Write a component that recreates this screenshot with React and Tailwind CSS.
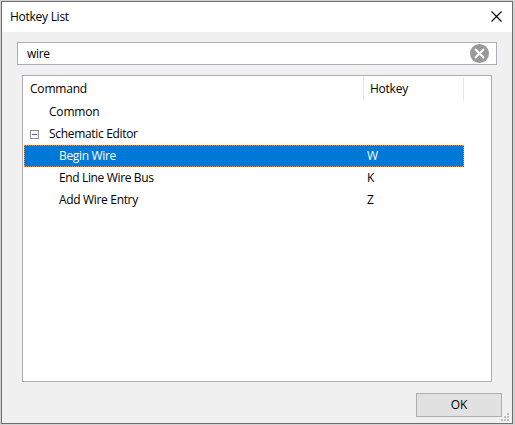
import React from "react";

const rows = [
  { name: "Begin Wire", hotkey: "W", selected: true, spacing: "tracking-[-0.33px]" },
  { name: "End Line Wire Bus", hotkey: "K", spacing: "tracking-[-0.36px]" },
  { name: "Add Wire Entry", hotkey: "Z", spacing: "tracking-[-0.33px]" },
];

function TitleBar() {
  return (
    <div className="flex h-[30px] items-start justify-between bg-white pr-[10px] pl-2">
      <span className="mt-[7px] tracking-[-0.27px]">Hotkey List</span>
      <svg className="mt-[9px]" width="11" height="11" viewBox="0 0 11 11" fill="none" stroke="#000" strokeWidth="1.1">
        <path d="M0.5 0.5L10.5 10.5M10.5 0.5L0.5 10.5" />
      </svg>
    </div>
  );
}

function SearchField() {
  return (
    <div className="mr-[15px] ml-[15px] flex h-[23px] items-center justify-between border border-[#abadb3] bg-white pr-[7px] pl-[9px]">
      <span className="tracking-[-0.3px]">wire</span>
      <svg width="19" height="19" viewBox="0 0 19 19">
        <circle cx="9.5" cy="9.5" r="9.5" fill="#999" />
        <path d="M5 5L14 14M14 5L5 14" stroke="#fff" strokeWidth="2" />
      </svg>
    </div>
  );
}

function Row({ row }) {
  return (
    <div className={`relative flex h-[22px] w-[440px] items-center ${row.selected ? "bg-[#0078d7] text-white" : ""}`}>
      <span className={`w-[343px] pl-[35px] ${row.spacing}`}>{row.name}</span>
      <span>{row.hotkey}</span>
      {row.selected && (
        <svg className="absolute inset-0" width="440" height="22" fill="none" stroke="#ff8728" strokeDasharray="1 1">
          <path d="M0 0.5H440M0 21.5H440M0.5 0V22M439.5 0V22" />
        </svg>
      )}
    </div>
  );
}

export default function App() {
  return (
    <div className="h-[425px] w-[515px] bg-[#d2d2d2] pt-px pl-px font-['Open_Sans','Noto_Sans',sans-serif] text-[12px] leading-4 whitespace-nowrap text-black">
      <div className="flex h-[423px] w-[512px] flex-col border border-[#6e6e6e] bg-[#f0f0f0]">
        <TitleBar />
        <div className="h-[10px]" />
        <SearchField />
        <div className="mt-[10px] ml-5 h-[307px] w-[470px] border border-[#abadb3] bg-white p-px">
          <div className="flex h-6 items-center">
            <div className="flex h-6 w-[340px] items-center border-r border-[#e5e5e5] pl-1.5 tracking-[-0.2px]">Command</div>
            <div className="flex h-6 w-[100px] items-center border-r border-[#e5e5e5] pl-1.5 tracking-[-0.25px]">Hotkey</div>
          </div>
          <div className="flex h-[22px] items-center pl-[25px] tracking-[-0.2px]">Common</div>
          <div className="flex h-[22px] items-center pl-1.5">
            <svg className="mr-[10px]" width="9" height="9" viewBox="0 0 9 9" fill="none" shapeRendering="crispEdges">
              <rect x="0.5" y="0.5" width="8" height="8" fill="#fbfbfb" stroke="#919191" />
              <path d="M2 4.5H7" stroke="#4b63a7" />
            </svg>
            <span className="tracking-[-0.32px]">Schematic Editor</span>
          </div>
          {rows.map((row) => (
            <Row key={row.name} row={row} />
          ))}
        </div>
        <div className="mt-[11px] flex justify-end pr-[10px]">
          <button className="h-6 w-[86px] border border-[#adadad] bg-[#e1e1e1]">OK</button>
        </div>
        <svg className="-mt-[4px] mr-[3px] self-end" width="8" height="8" viewBox="0 0 8 8" fill="#bfbfbf">
          <path d="M6 0h2v2h-2zM3 3h2v2h-2zM6 3h2v2h-2zM0 6h2v2h-2zM3 6h2v2h-2zM6 6h2v2h-2z" />
        </svg>
      </div>
    </div>
  );
}
